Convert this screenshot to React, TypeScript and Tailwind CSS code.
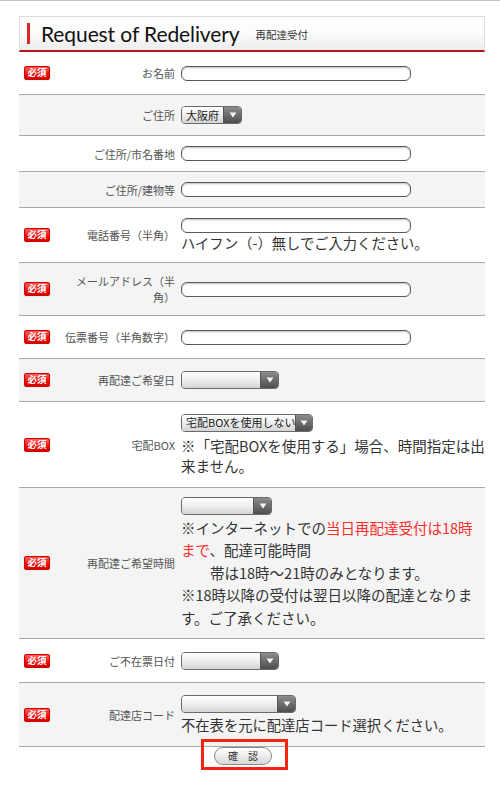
import React from "react";

const jp = { fontFamily: '"Noto Sans CJK JP", "Noto Sans", sans-serif' };

function Badge() {
  return (
    <span className="inline-flex items-center justify-center w-[26px] h-[14px] rounded-[2px] bg-gradient-to-b from-[#ff5a5a] via-[#f01010] to-[#d80000] border border-[#d00000] text-white text-[9.5px] font-bold leading-none shadow-[0_0_1px_rgba(0,0,0,0.3)]">
      必須
    </span>
  );
}

function TextInput() {
  return (
    <div className="w-[230px] h-[15px] rounded-[6px] border border-[#5a5a5a] bg-white shadow-[inset_0_1px_2px_rgba(0,0,0,0.25)]" />
  );
}

function Select({ width, text }: { width: number; text?: string }) {
  return (
    <div
      className="flex h-[18px] rounded-[4px] border border-[#6a6a6a] overflow-hidden"
      style={{ width }}
    >
      <div className="flex-1 flex items-center pl-[4px] bg-gradient-to-b from-[#ffffff] via-[#eeeeee] to-[#d4d4d4] text-[11px] text-[#222] leading-none whitespace-nowrap">
        {text}
      </div>
      <div className="w-[18px] flex items-center justify-center bg-gradient-to-b from-[#8c8c8c] to-[#4e4e4e] border-l border-[#555]">
        <svg width="8" height="6" viewBox="0 0 8 6">
          <path d="M0.5 0.5 L7.5 0.5 L4 5.5 Z" fill="#f4f4f4" />
        </svg>
      </div>
    </div>
  );
}

function Row({
  h,
  gray,
  req,
  label,
  children,
}: {
  h: number;
  gray?: boolean;
  req?: boolean;
  label: React.ReactNode;
  children: React.ReactNode;
}) {
  return (
    <div
      className={`grid grid-cols-[37px_125px_1fr] items-center border-b border-[#a9a9a9] ${
        gray ? "bg-[#f4f4f4]" : "bg-white"
      }`}
      style={{ height: h }}
    >
      <div className="pl-[5px] flex items-center">{req ? <Badge /> : null}</div>
      <div className="pr-[6px] text-right text-[11px] leading-[16px] text-[#555]">{label}</div>
      <div className="flex flex-col items-start">{children}</div>
    </div>
  );
}

export default function App() {
  return (
    <div className="w-[500px] min-h-[802px] bg-white border-t border-[#c4c4c4]" style={jp}>
      <div className="pl-[19px] pr-[15px] pt-[15px]">
        {/* Header */}
        <div className="h-[36px] flex items-center border-t border-x border-[#dcdcdc] border-b-2 border-b-[#b31616] bg-gradient-to-b from-[#ffffff] via-[#fbfbfb] to-[#ececec] pl-[7px]">
          <div className="w-[3px] h-[21px] bg-[#d8262b]" />
          <div
            className="ml-[11px] text-[21px] leading-none text-[#111] tracking-[-0.1px]"
            style={{ fontFamily: '"Lato", "Noto Sans", sans-serif' }}
          >
            Request of Redelivery
          </div>
          <div className="ml-[16px] mt-[3px] text-[10.5px] leading-none text-[#333]">再配達受付</div>
        </div>

        {/* Rows */}
        <Row h={43} req label="お名前">
          <TextInput />
        </Row>
        <Row h={41} gray label="ご住所">
          <Select width={61} text="大阪府" />
        </Row>
        <Row h={36} label="ご住所/市名番地">
          <TextInput />
        </Row>
        <Row h={36} gray label="ご住所/建物等">
          <TextInput />
        </Row>
        <Row h={55} req label="電話番号（半角）">
          <TextInput />
          <div className="text-[14.3px] leading-[20px] text-[#333] whitespace-nowrap">ハイフン（-）無しでご入力ください。</div>
        </Row>
        <Row
          h={53}
          gray
          req
          label={
            <>
              メールアドレス（半
              <br />
              角）
            </>
          }
        >
          <TextInput />
        </Row>
        <Row h={43} req label="伝票番号（半角数字）">
          <TextInput />
        </Row>
        <Row h={43} gray req label="再配達ご希望日">
          <Select width={98} />
        </Row>
        <Row h={86} req label="宅配BOX">
          <Select width={132} text="宅配BOXを使用しない" />
          <div className="text-[14.5px] leading-[20px] text-[#333] whitespace-nowrap mt-[4px]">
            ※「宅配BOXを使用する」場合、時間指定は出
            <br />
            来ません。
          </div>
        </Row>
        <Row h={151} gray req label="再配達ご希望時間">
          <Select width={91} />
          <div className="text-[14.5px] leading-[22.5px] text-[#333] whitespace-nowrap mt-[2px]">
            ※インターネットでの<span className="text-[#ff2d2d]">当日再配達受付は18時</span>
            <br />
            <span className="text-[#ff2d2d]">まで</span>、配達可能時間
            <br />
            <span className="pl-[29px]">帯は18時〜21時のみとなります。</span>
            <br />
            ※18時以降の受付は翌日以降の配達となりま
            <br />
            す。ご了承ください。
          </div>
        </Row>
        <Row h={44} req label="ご不在票日付">
          <Select width={98} />
        </Row>
        <Row h={64} gray req label="配達店コード">
          <Select width={115} />
          <div className="text-[14.3px] leading-[20px] text-[#333] whitespace-nowrap mt-[2px]">不在表を元に配達店コード選択ください。</div>
        </Row>

        {/* Button */}
        <div className="ml-[195px] relative w-[58px]">
          <button className="w-[58px] h-[18px] rounded-full border border-[#8a8a8a] bg-gradient-to-b from-[#ffffff] to-[#d9d9d9] text-[10px] leading-none text-[#333] flex items-center justify-center">
            確　認
          </button>
          <div className="absolute left-[-13px] top-[-8px] w-[87px] h-[31px] border-[3px] border-[#f3250f] pointer-events-none" />
        </div>
      </div>
    </div>
  );
}
